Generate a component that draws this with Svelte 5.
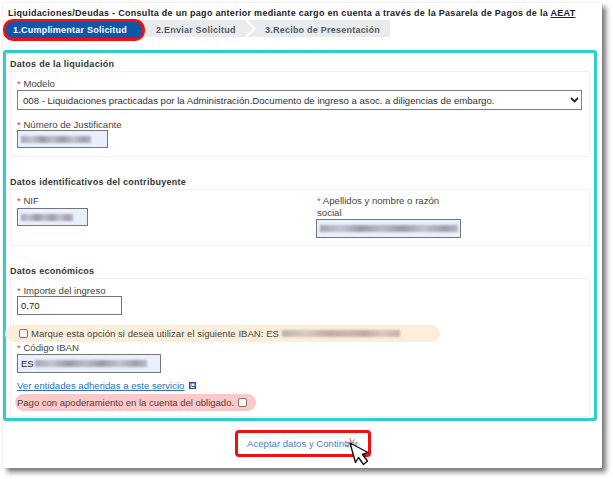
<script lang="ts">
  const steps = ['2.Enviar Solicitud', '3.Recibo de Presentación'];
</script>

<div class="page">
  <main class="card">
    <h1>Liquidaciones/Deudas - Consulta de un pago anterior mediante cargo en cuenta a través de la Pasarela de Pagos de la <abbr>AEAT</abbr></h1>

    <nav class="steps">
      <span class="step-active">1.Cumplimentar Solicitud</span>
      {#each steps as step, i}
        {#if i === 1}
          <svg class="chevron" width="12" height="17" viewBox="0 0 12 17"><path d="M1 0l8.500 8.500L1 17" fill="none" stroke="#fff" stroke-width="2"/></svg>
        {/if}
        <span class="step" class:second={i === 1}>{step}</span>
      {/each}
    </nav>

    <div class="form-box">
      <h2>Datos de la liquidación</h2>
      <section class="group first">
        <div class="lbl"><i>*</i> Modelo</div>
        <div class="select">
          <span>008 - Liquidaciones practicadas por la Administración.Documento de ingreso a asoc. a diligencias de embargo.</span>
          <svg width="9" height="6" viewBox="0 0 9 6"><path d="M1 1l3.500 3.500L8 1" fill="none" stroke="#222" stroke-width="1.800"/></svg>
        </div>
        <div class="lbl gap-top"><i>*</i> Número de Justificante</div>
        <div class="input filled w-just"><span class="blur b-just"></span></div>
      </section>

      <h2 class="h-second">Datos identificativos del contribuyente</h2>
      <section class="group two-col">
        <div>
          <div class="lbl"><i>*</i> NIF</div>
          <div class="input filled w-nif"><span class="blur b-nif"></span></div>
        </div>
        <div class="col-name">
          <div class="lbl"><i>*</i> Apellidos y nombre o razón<br />social</div>
          <div class="input filled w-name"><span class="blur b-name"></span></div>
        </div>
      </section>

      <h2 class="h-third">Datos económicos</h2>
      <section class="group last">
        <div class="lbl"><i>*</i> Importe del ingreso</div>
        <div class="input w-imp">0,70</div>
        <div class="pill orange">
          <span class="check"></span>
          <span>Marque esta opción si desea utilizar el siguiente IBAN: ES</span>
          <span class="blur b-pill"></span>
        </div>
        <div class="lbl"><i>*</i> Código IBAN</div>
        <div class="input filled w-iban">ES<span class="blur b-iban"></span></div>
        <div class="link-row">
          <a href="#entidades">Ver entidades adheridas a este servicio </a>
          <svg width="7" height="7" viewBox="0 0 7 7"><rect width="7" height="7" fill="#2f4fa8"/><path d="M2 1.500v4h3.500" fill="none" stroke="#fff"/><path d="M3 1.500h2.500v2.500H3z" fill="#fff"/></svg>
        </div>
        <div class="pill red">
          <span>Pago con apoderamiento en la cuenta del obligado.</span>
          <span class="check"></span>
        </div>
      </section>
    </div>

    <div class="actions">
      <span class="accept">
        Aceptar datos y Continuar
        <svg class="cursor" width="27" height="28" viewBox="0 0 27 28">
          <path d="M6 0.500L7 4M10.500 1.500L8.500 4.500M1 3.500L4.500 5M1.500 8L4 7" stroke="#f01010" stroke-width="0.800" fill="none"/>
          <path d="M6 5l18 9.500-5.500 2 5 6.500-4 3.500-5-7-3 5z" fill="#fff" stroke="#111" stroke-width="1.400" stroke-linejoin="round"/>
        </svg>
      </span>
    </div>
  </main>
</div>

<style>
  :global(body) {
    background: #fff;
    font-family: "Liberation Sans", Arial, sans-serif;
  }

  .page {
    width: 613px;
    height: 479px;
    padding: 3px 0 0 3px;
    box-sizing: border-box;
  }

  .card {
    width: 599px;
    height: 465px;
    box-sizing: border-box;
    padding: 4px 5px 0 0;
    background: #fff;
    box-shadow: 4px 4px 5px #777, 0 0 2px #e4e4e4;
  }

  h1 {
    margin: 0 0 0 5px;
    font-size: 9px;
    line-height: 12px;
    letter-spacing: 0.29px;
    white-space: nowrap;
    color: #222;
  }

  abbr {
    text-decoration: underline;
  }

  .steps {
    display: flex;
    align-items: center;
    height: 22px;
    width: 387px;
    background: linear-gradient(#fff 1px, #e9ecef 1px, #e9ecef 18px, #fff 18px);
    font-size: 9px;
    font-weight: 700;
    letter-spacing: 0.23px;
    white-space: nowrap;
    color: #555a60;
  }

  .step-active {
    box-sizing: border-box;
    width: 142px;
    height: 22px;
    display: flex;
    align-items: center;
    padding-left: 7px;
    border: 3px solid #f01010;
    border-radius: 10px;
    background: #0f57a8;
    color: #fff;
  }

  .step {
    padding-left: 11px;
    width: 100px;
    box-sizing: border-box;
  }

  .chevron {
    margin-top: -3px;
    flex: none;
  }

  .step.second {
    padding-left: 8px;
    width: auto;
  }

  .form-box {
    box-sizing: border-box;
    margin-top: 9px;
    width: 594px;
    height: 371px;
    border: 3px solid #2ccfc9;
    border-radius: 3px;
    padding: 5px 4px 0;
  }

  h2 {
    margin: 0;
    font-size: 9px;
    line-height: 12px;
    letter-spacing: 0.27px;
    color: #333;
  }

  .h-second {
    margin-top: 19px;
  }

  .h-third {
    margin-top: 19px;
  }

  .group {
    box-sizing: border-box;
    margin-top: 1px;
    border: 1px solid #eef1f6;
    padding: 6px 6px 0;
    color: #444;
  }

  .first {
    height: 86px;
  }

  .two-col {
    height: 57px;
    display: flex;
    padding-top: 5px;
  }

  .two-col .w-nif {
    margin-top: 1px;
  }

  .col-name {
    margin-left: 229px;
  }

  .last {
    height: 139px;
  }

  .lbl {
    font-size: 9.600px;
    line-height: 12px;
    color: #444;
  }

  .lbl i {
    font-style: normal;
    color: #d33;
  }

  .gap-top {
    margin-top: 9px;
  }

  .select {
    box-sizing: border-box;
    width: 565px;
    height: 20px;
    display: flex;
    align-items: center;
    justify-content: space-between;
    padding: 0 2px 0 5px;
    border: 1px solid #808080;
    font-size: 9.600px;
    color: #333;
    background: #fff;
  }

  .input {
    box-sizing: border-box;
    height: 19px;
    display: flex;
    align-items: center;
    padding-left: 3px;
    border: 1px solid #777;
    font-size: 9.500px;
    color: #222;
    background: #fff;
  }

  .filled {
    background: #e8f0fe;
  }

  .w-just { width: 91px; height: 18px; margin-top: -1px; }
  .w-nif { width: 71px; height: 18px; }
  .w-name { width: 145px; margin-left: -1px; }
  .w-imp { width: 105px; margin-top: -1px; }
  .w-iban { width: 144px; }

  .blur {
    display: block;
    height: 7px;
    filter: blur(1.200px);
    background: linear-gradient(90deg, #a8a8b2, #c4c4ce 15%, #9a9aa6 30%, #bcbcc6 45%, #9c9ca8 60%, #c4c4ce 75%, #a0a0ac 90%, #b8b8c2);
  }

  .b-just { width: 70px; }
  .b-nif { width: 52px; }
  .b-name { width: 138px; }
  .b-iban { width: 112px; margin-left: 1px; }
  .b-pill {
    width: 118px;
    background: linear-gradient(90deg, #c2b3aa, #d8cbbb 20%, #bfaea6 40%, #c8b9ae 55%, #bdaca5 70%, #d6c9ba 85%, #c4b5ab);
  }

  .pill {
    display: flex;
    align-items: center;
    height: 17px;
    font-size: 9.500px;
    letter-spacing: 0.05px;
    white-space: nowrap;
    border-radius: 9px;
    color: #444;
  }

  .orange {
    width: 435px;
    margin: 10px 0 0 -12px;
    padding-left: 14px;
    box-sizing: border-box;
    background: #fdeeda;
    gap: 3px;
  }

  .red {
    width: 241px;
    margin: 3px 0 0 -2px;
    padding-left: 2px;
    box-sizing: border-box;
    background: #fbc9c9;
    gap: 4px;
    letter-spacing: 0;
    color: #5a3a3a;
  }

  .check {
    box-sizing: border-box;
    width: 9px;
    height: 9px;
    border: 1px solid #777;
    border-radius: 2px;
    background: #fff8f0;
  }

  .link-row {
    display: flex;
    align-items: center;
    gap: 5px;
    margin-top: 6px;
    height: 12px;
  }

  a {
    font-size: 9.600px;
    color: #2a6fb8;
  }

  .actions {
    display: flex;
    justify-content: center;
    margin-top: 9px;
  }

  .accept {
    position: relative;
    box-sizing: border-box;
    display: flex;
    align-items: center;
    justify-content: center;
    margin-left: 5px;
    width: 136px;
    height: 27px;
    border: 3px solid #f01010;
    border-radius: 4px;
    font-size: 9.600px;
    color: #4a7fc0;
  }

  .cursor {
    position: absolute;
    left: 106px;
    top: 5px;
  }
</style>
